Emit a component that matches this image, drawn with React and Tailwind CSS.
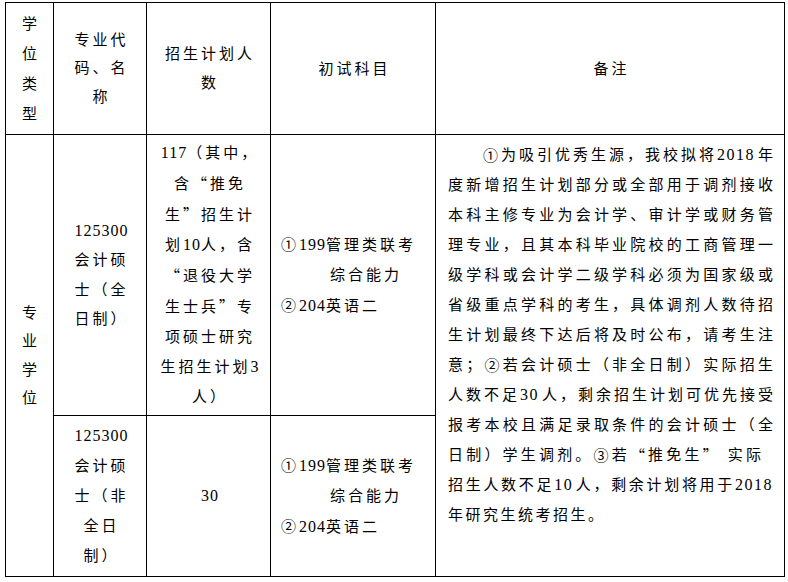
import React from "react";

const CJK = "font-['Noto_Sans_CJK_SC'] [font-feature-settings:'fwid']";
const isCJKSym = (c) => /^[“”①②③]$/.test(c);

function Txt({ s }) {
  return s
    .split(/(\d+|[“”①②③])/)
    .filter(Boolean)
    .map((p, i) =>
      /^\d+$/.test(p) ? (
        <span key={i} className="tracking-[1px] text-[16px]">{p}</span>
      ) : isCJKSym(p) ? (
        <span key={i} className={CJK}>{p}</span>
      ) : (
        <React.Fragment key={i}>{p}</React.Fragment>
      )
    );
}

function JLine({ s, className = "" }) {
  const tokens = s.match(/\d+|./gu) || [];
  return (
    <div className={"flex justify-between h-[30px] items-center " + className}>
      {tokens.map((ch, i) => (
        <span
          key={i}
          className={
            "whitespace-pre " +
            (isCJKSym(ch)
              ? CJK
              : /\d/.test(ch)
              ? "text-[16px] tracking-[1.5px]"
              : "")
          }
        >
          {ch}
        </span>
      ))}
    </div>
  );
}

const cell =
  "border-r border-b border-black flex flex-col items-center justify-center text-center";

function Lines({ lines, lh = "leading-[30px]" }) {
  return (
    <div className={"tracking-[3px] pl-[3px] " + lh}>
      {lines.map((l, i) => (
        <div key={i} className="whitespace-nowrap">
          <Txt s={l} />
        </div>
      ))}
    </div>
  );
}

const remarks = [
  "度新增招生计划部分或全部用于调剂接收",
  "本科主修专业为会计学、审计学或财务管",
  "理专业，且其本科毕业院校的工商管理一",
  "级学科或会计学二级学科必须为国家级或",
  "省级重点学科的考生，具体调剂人数待招",
  "生计划最终下达后将及时公布，请考生注",
  "意；②若会计硕士（非全日制）实际招生",
  "人数不足30人，剩余招生计划可优先接受",
  "报考本校且满足录取条件的会计硕士（全",
];

function Subjects() {
  return (
    <div className="tracking-[3px] leading-[30px] text-left whitespace-nowrap">
      <div>
        <Txt s="①199管理类联考" />
      </div>
      <div className="pl-[49px]">综合能力</div>
      <div>
        <Txt s="②204英语二" />
      </div>
    </div>
  );
}

export default function App() {
  return (
    <div className="bg-white w-[788px] h-[582px] pt-[2px] pl-[5px] text-black text-[15px] font-['Liberation_Serif','Noto_Sans_CJK_SC',serif]">
      <div className="grid w-fit grid-cols-[48px_93px_124px_165px_349px] grid-rows-[132px_281px_161px] border-l border-t border-black">
        {/* header */}
        <div className={cell}>
          <Lines lines={["学", "位", "类", "型"]} />
        </div>
        <div className={cell}>
          <Lines lines={["专业代", "码、名", "称"]} lh="leading-[28.5px]" />
        </div>
        <div className={cell}>
          <Lines lines={["招生计划人", "数"]} lh="leading-[29px]" />
        </div>
        <div className={cell}>
          <Lines lines={["初试科目"]} />
        </div>
        <div className={cell}>
          <Lines lines={["备注"]} />
        </div>

        {/* row 2 */}
        <div className={cell + " row-span-2"}>
          <Lines lines={["专", "业", "学", "位"]} lh="leading-[28.5px]" />
        </div>
        <div className={cell}>
          <Lines lines={["125300", "会计硕", "士（全", "日制）"]} lh="leading-[29.5px]" />
        </div>
        <div className={cell}>
          <Lines
            lines={[
              "117（其中，",
              "含“推免",
              "生”招生计",
              "划10人，含",
              "“退役大学",
              "生士兵”专",
              "项硕士研究",
              "生招生计划3",
              "人）",
            ]}
          />
        </div>
        <div className={cell + " items-start pl-[10px]"}>
          <Subjects />
        </div>
        <div className="row-span-2 border-r border-b border-black pt-[5px] pl-[12px] pr-[11px]">
          <JLine s="①为吸引优秀生源，我校拟将2018年" className="pl-[35px]" />
          {remarks.map((l, i) => (
            <JLine key={i} s={l} />
          ))}
          <JLine s="日制）学生调剂。③若“推免生” 实际" className="pr-[12px]" />
          <JLine s="招生人数不足10人，剩余计划将用于2018" />
          <div className="h-[30px] leading-[30px] tracking-[2.5px] whitespace-nowrap">
            年研究生统考招生。
          </div>
        </div>

        {/* row 3 */}
        <div className={cell}>
          <Lines lines={["125300", "会计硕", "士（非", "全日", "制）"]} />
        </div>
        <div className={cell}>
          <Lines lines={["30"]} />
        </div>
        <div className={cell + " items-start pl-[10px]"}>
          <Subjects />
        </div>
      </div>
    </div>
  );
}
